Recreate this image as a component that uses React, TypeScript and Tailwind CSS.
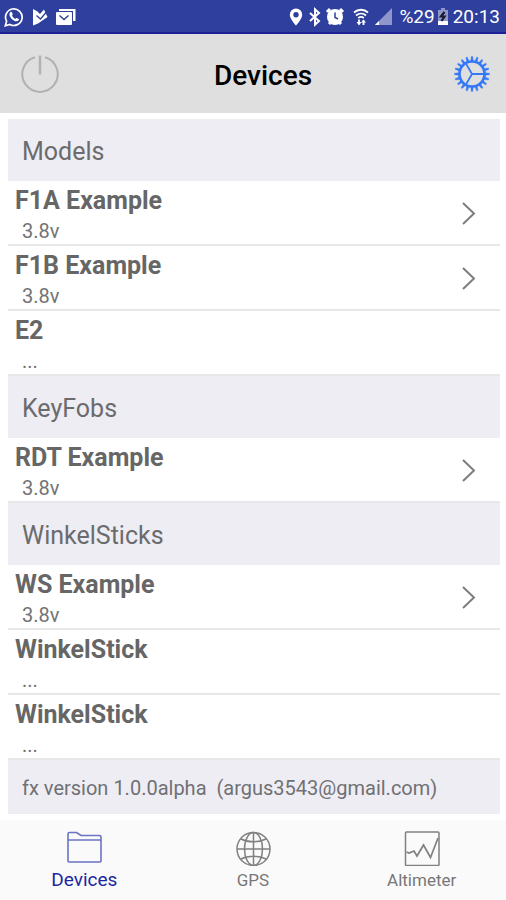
import React from "react";
import clsx from "clsx";

const sections = [
  {
    title: "Models",
    items: [
      { name: "F1A Example", status: "3.8v", connected: true },
      { name: "F1B Example", status: "3.8v", connected: true },
      { name: "E2", status: "...", connected: false },
    ],
  },
  {
    title: "KeyFobs",
    items: [{ name: "RDT Example", status: "3.8v", connected: true }],
  },
  {
    title: "WinkelSticks",
    items: [
      { name: "WS Example", status: "3.8v", connected: true },
      { name: "WinkelStick", status: "...", connected: false },
      { name: "WinkelStick", status: "...", connected: false },
    ],
  },
];

const gearTeeth = Array.from({ length: 20 }, (_, i) => i * 18);

function StatusBar() {
  return (
    <div className="flex h-[34px] items-center justify-between border-b-2 border-[#1b1f98] bg-[#2f3f9e] pt-0.5 pr-1.5 pl-1 text-white">
      <div className="flex items-center gap-2">
        <svg className="h-5 w-5" viewBox="0 0 20 20" fill="none" stroke="currentColor">
          <path d="M1.3 18.7 2.6 14.2A8.3 8.3 0 1 1 5.8 17.4Z" strokeWidth="1.7" />
          <path d="M6.3 5.3c.7-.8 1.4-.6 1.7.1l.7 1.7c.2.6-.8 1.2-.6 1.6.7 1.4 1.7 2.4 3.1 3 .5.2 1-.9 1.5-.8l1.8.9c.6.3.5 1.1 0 1.7-1 1-2.4 1-3.8.4-2.3-.9-4-2.6-4.9-4.8-.6-1.5-.4-2.8.5-3.8Z" fill="currentColor" stroke="none" />
        </svg>
        <svg className="h-5 w-4" viewBox="0 0 16 20">
          <path d="M1 2 5.500 4.500 8 7l4-4.500 1.500 3.500L15.500 10 6 16.500 1 18.500Z" fill="currentColor" />
          <path d="m4.500 8.500 4 3.500L14 5.500" fill="none" stroke="#2f3f9e" strokeWidth="1.3" />
        </svg>
        <svg className="h-5 w-5" viewBox="0 0 20 20">
          <path d="M3 2h16.500v12H17V4H3Z" fill="currentColor" />
          <rect x="0" y="5" width="16" height="13" rx="1" fill="currentColor" />
          <path d="m3.500 8.500 4.500 4 4.500-4" fill="none" stroke="#2f3f9e" strokeWidth="1.500" />
        </svg>
      </div>
      <div className="flex items-center text-[19px] leading-6">
        <svg className="mr-1.5 h-5 w-3.5" viewBox="0 0 14 20">
          <path d="M7 1.500a6.200 6.200 0 0 0-6.200 6.200C.8 12 7 18.500 7 18.500s6.200-6.500 6.200-10.800A6.200 6.200 0 0 0 7 1.500Zm0 3.500a2.700 2.700 0 1 1 0 5.400A2.700 2.700 0 0 1 7 5Z" fill="currentColor" fillRule="evenodd" />
        </svg>
        <svg className="mr-1 h-5 w-3" viewBox="0 0 12 20" fill="none" stroke="currentColor" strokeWidth="2">
          <path d="m1 6 9 8-4 3.700V2.300L10 6l-9 8" />
        </svg>
        <svg className="mr-2 h-5 w-5" viewBox="0 0 20 20">
          <path d="m2 5 3-3M18 5l-3-3M4 17l2-2M16 17l-2-2" stroke="currentColor" strokeWidth="3" />
          <circle cx="10" cy="10" r="8" fill="currentColor" />
          <path d="M10 5.500V10.500l3 1.500" fill="none" stroke="#2f3f9e" strokeWidth="1.500" />
        </svg>
        <svg className="mr-1.5 h-5 w-4" viewBox="0 0 16 20" fill="none" stroke="currentColor" strokeWidth="1.800">
          <path d="M1 5.500c4-3.700 10-3.700 14 0M3 8.500c3-2.600 7-2.600 10 0M5.200 11c1.700-1.300 4-1.300 5.600 0" />
          <path d="M6 12.500V16M10.500 13.500V18" />
          <path d="m3.500 15 2.500 3.500L8.500 15ZM8 15.500l2.500-3 2.500 3Z" fill="currentColor" stroke="none" />
        </svg>
        <svg className="mr-1.5 h-5 w-[18px]" viewBox="0 0 18 20">
          <path d="M17 1v17H0Z" fill="#8e96cb" />
          <path d="M4 14v4H0Z" fill="currentColor" />
        </svg>
        <span>%29</span>
        <svg className="ml-0.5 h-5 w-3" viewBox="0 0 12 20">
          <path d="M1 3h3V1h4v2h3v15H1Z" fill="#8e96cb" />
          <path d="M1 14h10v4H1Z" fill="currentColor" />
          <path d="M7.500 5 4 9.500h3.500L4.500 14" fill="none" stroke="#1b1b2c" strokeWidth="2.200" />
        </svg>
        <span className="ml-1">20:13</span>
      </div>
    </div>
  );
}

function Header() {
  return (
    <header className="grid h-[79px] grid-cols-[1fr_auto_1fr] items-center bg-[#dfdfdf] px-4">
      <button type="button" aria-label="Power" className="ml-1 justify-self-start text-[#b2b2b2]">
        <svg className="h-10 w-10" viewBox="0 0 40 40" fill="none" stroke="currentColor" strokeWidth="2">
          <path d="M15 3.200a17.700 17.700 0 1 0 10 0" />
          <path d="M20 1.500v19" strokeWidth="2.500" />
        </svg>
      </button>
      <h1 className="pt-1 pl-5 text-[28px] leading-9 font-medium text-black">Devices</h1>
      <button type="button" aria-label="Settings" className="justify-self-end text-[#3478f6]">
        <svg className="h-9 w-9" viewBox="0 0 36 36" fill="none" stroke="currentColor">
          <circle cx="18" cy="18" r="12.500" strokeWidth="2.600" />
          {gearTeeth.map((angle) => (
            <path key={angle} d="m16.800 5 .5-4.500h1.400l.5 4.500Z" fill="currentColor" strokeWidth="0.400" transform={`rotate(${angle} 18 18)`} />
          ))}
          <path d="M18 18h12M18 18 12 7.600M18 18l-6 10.400" strokeWidth="1.800" />
        </svg>
      </button>
    </header>
  );
}

function DeviceRow({ name, status, connected }: { name: string; status: string; connected: boolean }) {
  return (
    <li className="border-b-2 border-[#e7e7e9]">
      <button type="button" className="flex h-[63px] w-full items-center justify-between pr-6 pl-[7px] text-left">
        <span className="flex flex-col pt-1">
          <span className="text-[25px] leading-8 font-bold text-[#666]">{name}</span>
          <span className="pl-[7px] text-xl leading-7 text-[#737373]">{status}</span>
        </span>
        {connected && (
          <svg className="h-6 w-3.5" viewBox="0 0 14 24" fill="none" stroke="#7d7d7d" strokeWidth="2">
            <path d="m1 2 11 10.500L1 23" />
          </svg>
        )}
      </button>
    </li>
  );
}

function FolderIcon() {
  return (
    <svg className="h-9 w-9" viewBox="0 0 36 36" fill="none" stroke="#6b73c4" strokeWidth="1.600">
      <path d="M2 31V4Q2 2.500 3.500 2.500H10.500L15 5.500H33.500Q35 5.500 35 7V31Q35 32 34 32H3Q2 32 2 31ZM2 10h33" />
    </svg>
  );
}

function GlobeIcon() {
  return (
    <svg className="h-9 w-9" viewBox="0 0 36 36" fill="none" stroke="#808080" strokeWidth="1.500">
      <circle cx="18.500" cy="20" r="16.500" transform="translate(0 -1)" />
      <ellipse cx="18.500" cy="19" rx="9" ry="16.500" />
      <path d="M18.500 2.500v33M2 19h33M6 9c7 3.700 18 3.700 25 0M6 29c7-3.700 18-3.700 25 0" />
    </svg>
  );
}

function ChartIcon() {
  return (
    <svg className="h-9 w-9" viewBox="0 0 36 36" fill="none" stroke="#808080" strokeWidth="1.500">
      <rect x="1.500" y="2" width="33.500" height="33.500" rx="1" />
      <path d="m2.500 22 2.500 1L10 21l3 5 6.500-11 7 12.500L34 8" strokeWidth="1.700" />
    </svg>
  );
}

const tabs = [
  { label: "Devices", icon: <FolderIcon />, active: true },
  { label: "GPS", icon: <GlobeIcon />, active: false },
  { label: "Altimeter", icon: <ChartIcon />, active: false },
];

export default function App() {
  return (
    <div className="flex min-h-screen flex-col bg-white font-['Roboto','Noto_Sans',sans-serif]">
      <StatusBar />
      <Header />
      <main className="mt-1.5 mr-1.5 mb-1.5 ml-2 flex-1">
        {sections.map((section) => (
          <section key={section.title}>
            <h2 className="flex h-[62px] items-center bg-[#eeedf3] px-3.5 pt-1 text-[25px] text-[#6b6b6e]">{section.title}</h2>
            <ul>
              {section.items.map((item, index) => (
                <DeviceRow key={index} {...item} />
              ))}
            </ul>
          </section>
        ))}
        <p className="flex h-[54px] items-center bg-[#eeedf3] px-3.5 pt-0.5 text-xl whitespace-pre text-[#707073]">
          {"fx version 1.0.0alpha  (argus3543@gmail.com)"}
        </p>
      </main>
      <nav className="grid h-20 grid-cols-3 bg-[#fafafa]">
        {tabs.map((tab) => (
          <button
            key={tab.label}
            type="button"
            aria-current={tab.active ? "page" : undefined}
            className={clsx(
              "flex flex-col items-center pt-2.5 leading-7",
              tab.active ? "text-[19px] text-[#1c27a5]" : "text-[17px] text-[#777]"
            )}
          >
            {tab.icon}
            {tab.label}
          </button>
        ))}
      </nav>
    </div>
  );
}
